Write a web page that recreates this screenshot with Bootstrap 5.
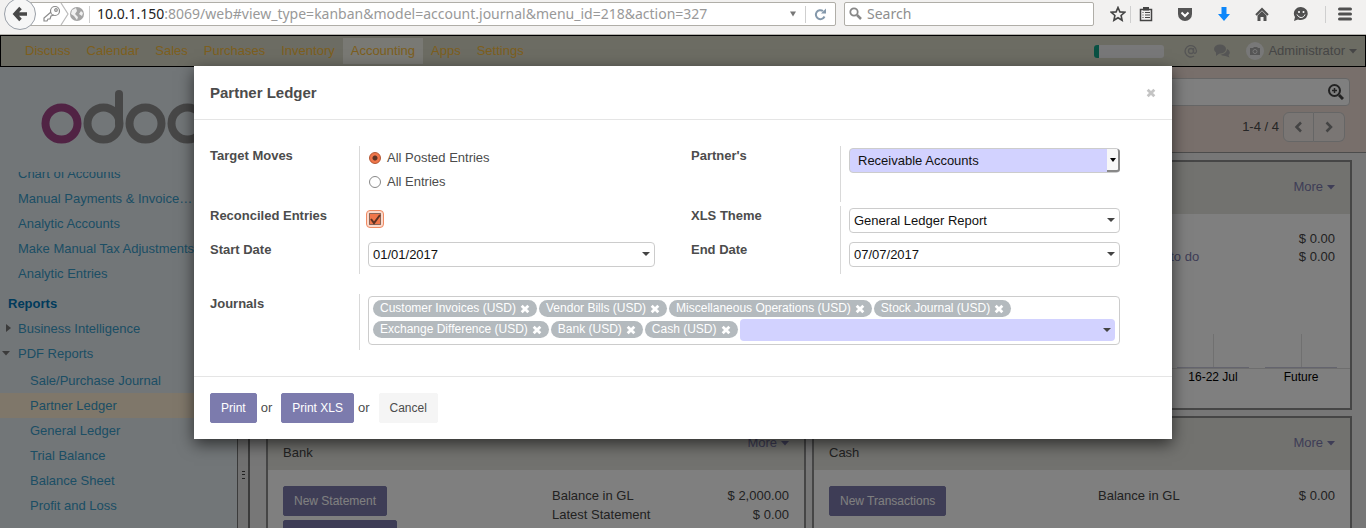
<!DOCTYPE html>
<html lang="en">
<head>
<meta charset="utf-8">
<meta name="viewport" content="width=device-width, initial-scale=1">
<title>Partner Ledger - Odoo</title>
<link href="https://cdn.jsdelivr.net/npm/bootstrap@5.3.0/dist/css/bootstrap.min.css" rel="stylesheet">
<style>
body{font-family:"Liberation Sans",Arial,sans-serif;font-size:13px;line-height:18px;color:#4c4c4c;overflow:hidden}
a{text-decoration:none}
svg{display:block;flex:none}
/* browser toolbar */
.chrome{height:35px;background:#f2f1f0;border-bottom:1px solid #b5b3ae;font:14px/24px "Noto Sans",sans-serif;padding:2px 14px 8px 4px}
.chrome button{border:0;background:none;padding:0}
.back-btn{width:32px;height:32px;border:1px solid #9aa0a8!important;border-radius:50%;background:#f6f6f6!important;margin-top:-4px;z-index:2}
.url-box,.find-box{height:24px;border:1px solid #b0aea8;background:#fff;border-radius:2px}
.url-box{margin-left:-8px;padding-left:10px}
.find-box input{border:0;outline:0;padding:0;background:none;color:#8e8e8e;height:22px;min-width:0}
.find-box input::placeholder{color:#8e8e8e}
.url-text{color:#999;white-space:nowrap;overflow:hidden;padding-left:7px}
.url-text b{color:#222;font-weight:400}
.find-box{width:250px}
.vline{width:1px;height:17px;background:#cfcfcf}
/* application */
.app-nav{height:32px;background:#d8d8c6;border:1px solid #000;padding:0 8px 0 16px}
.app-nav .nav-link{color:#fabe3c;padding:6px 8px;line-height:18px}
.app-nav .nav-link.active{background:#f2f2e8;padding-top:4px;padding-bottom:4px;margin:2px 0}
.meter{width:70px;height:13px;background:#f0f0f2;border-radius:3px}
.meter .progress-bar{background:#12a386}
.user-btn{border:0;background:none;color:#8c8c8c;padding:0}
.side{width:237px;background:#e5ecf1}
.side-scroll{overflow:hidden}
.side-list{margin:-11px 0 0}
.side-list a{display:block;height:25px;line-height:25px;padding-left:18px;color:#389cc9;white-space:nowrap}
.side-list .sub{padding-top:2px}
.side-list .sub a{padding-left:30px}
.side-list .current{background:#ffefd5}
.side-list h2{font-size:13px;font-weight:700;line-height:24px;margin:6px 0 0 8px;color:#0076b8}
.tri{position:absolute;left:6px;top:8px;color:#777}
.tri-open{left:2px;top:10px}
.logo-box{padding:22px 0 0 40px;height:105px}
.splitter{width:13px;background:#e2e2e2;border-left:1px solid #777;border-right:2px solid #777;padding-bottom:49px}
.grip{width:3px;height:8px;border-top:1px solid #444;border-bottom:1px solid #444;background:linear-gradient(transparent 2px,#444 2px,#444 3px,transparent 3px)}
.content{background:#eee}
.cpanel{background:#f0dfd6;border-bottom:1px solid #999;height:86px;padding:11px 16px 0}
.search-view{height:28px;border:1px solid #ccc;border-radius:4px;background:#fff;padding:0 5px}
.pager{padding:6px 5px 0 0}
.pager-btn{width:31px;height:30px;border:1px solid #ccc;background:#f5ece8;color:#888;padding:0}
.board{padding:7px 14px 0 16px;gap:6px;display:grid;grid-template-columns:1fr 1fr}
.tile{border:2px solid #8c8c8c;background:#fff;min-height:250px;color:#444}
.tile-head{background:#e4e4df;height:52px;padding:16px 15px 0}
.tile-head a,.tile-link{color:#7c7bad}
.tile-title{padding-top:10px}
.tile-body{padding:16px 15px;line-height:19px}
.tile-body.tight{line-height:18px}
.btn-odoo{--bs-btn-bg:#7c7bad;--bs-btn-border-color:#7c7bad;--bs-btn-color:#fff;--bs-btn-hover-bg:#6564a0;--bs-btn-hover-color:#fff}
.btn-odoo,.btn-plain{font-size:12px;line-height:18px;padding:5px 10px;border-radius:2px;height:30px}
.chart,.chart-names{padding-right:13px}
.chart{border-bottom:1px solid #ddd;height:35px}
.chart i{width:72px;border-bottom:1px solid #c9c8dc;display:flex;justify-content:center}
.chart i::before{content:"";width:1px;background:#e0e0e0}
.chart-names{font-size:12px;color:#000;line-height:16px;padding-bottom:23px}
.chart-names span{width:72px;text-align:center}
/* dialog */
.shade{position:absolute;inset:0;background:rgba(0,0,0,.5);z-index:5}
.wizard{max-width:978px;margin:31px auto 0}
.wizard .modal-content{background:#fff;box-shadow:0 5px 15px rgba(0,0,0,.6);color:#4c4c4c}
.wizard .modal-header{padding:16px;height:54px;border-bottom:1px solid #e5e5e5}
.wizard h1{font-size:15px;line-height:22px;font-weight:700}
.wizard .modal-body{padding:26px 52px 26px 16px}
.wizard .modal-footer{padding:16px;border-top:1px solid #e5e5e5;gap:4px}
.wizard .modal-footer>*{margin:0}
.form-cols{display:grid;grid-template-columns:minmax(0,1fr) 429px;column-gap:36px}
.frow{display:flex;min-height:34px}
.frow>label,.frow>.flabel{width:149px;flex:none;font-weight:700;line-height:20px;margin:0}
.frow>.fcell{flex:1;min-width:0;border-left:1px solid #d9d9d9;padding:2px 0 0 8px}
.frow-tall{min-height:60px}
.frow-tall .gapped{margin-bottom:4px}
.frow-journals{min-height:56px;margin-top:20px}
.field{display:block;width:100%;height:25px;border:1px solid #ccc;border-radius:4px;padding:0 20px 0 4px;color:#111;font-size:13px;outline:0;appearance:none;background:#fff url("data:image/svg+xml,%3Csvg xmlns='http://www.w3.org/2000/svg' width='8' height='5'%3E%3Cpath fill='%23444' d='M0 0h8L4 4z'/%3E%3C/svg%3E") no-repeat right 4px center}
.must{background-color:#d2d2ff}
.pick{position:relative}
.pick select{padding-left:8px}
.pick::after{content:"";position:absolute;right:0;top:1px;width:13px;height:23px;background:#f7f7f7 url("data:image/svg+xml,%3Csvg xmlns='http://www.w3.org/2000/svg' width='6' height='4'%3E%3Cpath d='M0 0h6L3 4z'/%3E%3C/svg%3E") no-repeat center;border-right:2px solid #888;border-bottom:2px solid #888;border-radius:0 3px 3px 0;pointer-events:none}
.choice{display:flex;align-items:center;gap:6px;line-height:24px;padding-left:1px;margin:0}
.choice input{appearance:none;width:12px;height:12px;border:1px solid #888;border-radius:50%;margin:0}
.choice input:checked{border-color:#b3532f;background:radial-gradient(circle,#5d3324 2px,#f0764a 3px)}
.tick{appearance:none;display:block;width:18px;height:18px;margin:2px 0 0 -2px;border:1px solid #f08a62;border-radius:4px;background:#fbd9cb url("data:image/svg+xml,%3Csvg xmlns='http://www.w3.org/2000/svg' width='14' height='14'%3E%3Cpath fill='%23f0764a' stroke='%23222' stroke-dasharray='1 1' d='M1.5 1.5h11v11h-11z'/%3E%3Cpath fill='none' stroke='%235d3324' stroke-width='2' d='M3 7l3 4 6-8'/%3E%3C/svg%3E") no-repeat center}
.tags{border:1px solid #ccc;border-radius:4px;padding:3px 4px 2px;gap:0 2px;min-height:47px}
.tag{background:#b4babe;color:#fff;height:17px;border-radius:9px;padding:0 7px;line-height:17px;font-size:12px;margin:0 0 4px;display:flex;align-items:center;gap:4px}
.tag button{border:0;background:none;padding:0;color:#fff}
.tags .field{flex:1;width:auto;min-width:90px;height:22px;border:0;margin-top:-2px}
.btn-plain{--bs-btn-bg:#f5f5f5;--bs-btn-border-color:#f5f5f5;--bs-btn-color:#4c4c4c}
.wizard .modal-footer .or{margin-right:5px}
</style>
</head>
<body class="vh-100 d-flex flex-column">
<svg class="d-none" aria-hidden="true">
<symbol id="x" viewBox="0 0 9 9"><path d="M1.500 1.500l6 6M7.500 1.500l-6 6" stroke="currentColor" stroke-width="2.500"/></symbol>
<symbol id="down" viewBox="0 0 8 5"><path d="M0 0h8L4 4.500z" fill="currentColor"/></symbol>
</svg>
<header class="chrome d-flex flex-shrink-0">
<button class="back-btn d-flex align-items-center justify-content-center flex-shrink-0" aria-label="Back"><svg width="16" height="16" viewBox="0 0 16 16" fill="none" stroke="#484848" stroke-width="3.500"><path d="M8.500 2L3 8l5.500 6M3 8h12"/></svg></button>
<div class="url-box flex-fill d-flex align-items-center">
<svg width="50" height="22" viewBox="0 0 50 22"><g fill="none" stroke="#8b8b8b" stroke-width="1.200"><circle cx="16" cy="8" r="4.500"/><circle cx="17" cy="7" r="1.300"/><path d="M12 9l-7 6v3h3l1-2h2l1-3 3-1"/><path d="M22 0l7 11-7 11" stroke="#bbb"/></g><circle cx="38" cy="11" r="7" fill="#a4a4a4"/><path d="M33 7l4-2 1 3-2 3 3 3-1 3-3-4-3-2zm9 1l2 2-1 3-3-2z" fill="#f0f0f0"/></svg>
<span class="vline"></span>
<div class="url-text flex-fill"><b>10.0.1.150</b>:8069/web#view_type=kanban&amp;model=account.journal&amp;menu_id=218&amp;action=327</div>
<svg width="8" height="6" class="me-2" viewBox="0 0 8 6"><path d="M1 0.500h6L4 5.500z" fill="#777"/></svg>
<span class="vline me-2"></span>
<button aria-label="Reload" class="me-2"><svg width="13" height="13" viewBox="0 0 13 13"><path d="M10.500 8.500A4.500 4.500 0 1 1 9 3" fill="none" stroke="#8498ab" stroke-width="2"/><path d="M7 5.500h5V0.500z" fill="#8498ab"/></svg></button>
</div>
<div class="find-box d-flex align-items-center ms-2 ps-1 flex-shrink-0"><svg width="14" height="14" viewBox="0 0 14 14" fill="none" stroke="#888"><circle cx="5" cy="5" r="3.700" stroke-width="1.800"/><path d="M8 8l4 4" stroke-width="2.500"/></svg><input class="ps-1" aria-label="Search" placeholder="Search"></div>
<div class="d-flex align-items-center flex-shrink-0">
<button class="ms-3" aria-label="Bookmark"><svg width="16" height="16" viewBox="0 0 16 16"><path d="M8 1.500l1.900 4.400 4.800.4-3.600 3.200 1 4.800L8 11.700l-4.100 2.600 1-4.800L1.300 6.300l4.800-.4z" fill="none" stroke="#444" stroke-width="1.600"/></svg></button>
<span class="vline mx-1"></span>
<button class="ms-1 me-3" aria-label="Bookmarks list"><svg width="14" height="16" viewBox="0 0 14 16"><path d="M1.500 3.500h11v11h-11z" fill="none" stroke="#444" stroke-width="1.500"/><path d="M3.500 6.500h1M6 6.500h5M3.500 9h1M6 9h5M3.500 11.500h1M6 11.500h5" stroke="#444" stroke-width="1"/><path d="M4 1h6v3.500H4z" fill="#444"/></svg></button>
<button class="ms-2 me-3" aria-label="Pocket"><svg width="16" height="15" viewBox="0 0 14 15"><path d="M0 1h14v6a7 7 0 0 1-14 0z" fill="#555"/><path d="M3.500 5.500L7 9l3.500-3.500" fill="none" stroke="#fff" stroke-width="2"/></svg></button>
<button class="ms-2 me-3" aria-label="Downloads"><svg width="14" height="16" viewBox="0 0 14 16"><path d="M4.500 1h5v7H13l-6 7-6-7h3.500z" fill="#0d87fa"/></svg></button>
<button class="ms-2 me-3" aria-label="Home"><svg width="14" height="16" viewBox="0 0 14 16"><path d="M1 9l6-6 6 6" fill="none" stroke="#505050" stroke-width="2"/><path d="M2.500 9.500L7 5l4.500 4.500V15H8.500v-4h-3v4h-3z" fill="#505050"/></svg></button>
<button class="ms-2" aria-label="Chat"><svg width="16" height="16" viewBox="0 0 16 16"><path d="M8 1a7 6.500 0 1 1-3 12.500L1 15l1-4A7 6.500 0 0 1 8 1z" fill="#505050"/><circle cx="6" cy="6" r="1" fill="#fff"/><circle cx="10.500" cy="6" r="1" fill="#fff"/><path d="M4 8.500c2 4 6.500 4 8 0" fill="none" stroke="#fff"/></svg></button>
<span class="vline me-2 ms-3"></span>
<button class="ms-1" aria-label="Menu"><svg width="14" height="14" viewBox="0 0 14 14"><path d="M1.500 2h11M1.500 7h11M1.500 12h11" stroke="#505050" stroke-width="3" stroke-linecap="round"/></svg></button>
</div>
</header>
<div class="position-relative d-flex flex-column flex-fill overflow-hidden">
<nav class="app-nav d-flex align-items-center flex-shrink-0">
<div class="nav flex-nowrap me-auto">
<a class="nav-link" href="#">Discuss</a><a class="nav-link" href="#">Calendar</a><a class="nav-link" href="#">Sales</a><a class="nav-link" href="#">Purchases</a><a class="nav-link" href="#">Inventory</a><a class="nav-link active" href="#">Accounting</a><a class="nav-link" href="#">Apps</a><a class="nav-link" href="#">Settings</a>
</div>
<div class="progress meter me-3"><div class="progress-bar" style="width:7%"></div></div>
<svg class="ms-1 me-3" width="14" height="14" viewBox="0 0 14 14" fill="none" stroke="#aaa" stroke-width="1.300"><circle cx="7" cy="7" r="2.500"/><path d="M9.500 4v4.500c1 1.500 3 .5 3-1.500a5.700 5.700 0 1 0-2.500 5"/></svg>
<svg class="me-3" width="16" height="14" viewBox="0 0 16 14" fill="#aaa"><ellipse cx="6" cy="5" rx="6" ry="4.500"/><path d="M2 7v5l4-3zM13 5c4 2 3 5 1.500 6l1 2.500-4-1.500C9 12 7 11 6.500 10.500 10 10.500 13 8 13 5z"/></svg>
<button class="user-btn d-flex align-items-center gap-1"><svg width="18" height="18" viewBox="0 0 18 18"><circle cx="9" cy="9" r="9" fill="#f0f0f0"/><path d="M4 6h3l1-1h3l1 1h2v7H4z" fill="#aaa"/><circle cx="9" cy="9.500" r="2" fill="#aaa" stroke="#f0f0f0"/></svg>Administrator <svg width="8" height="5"><use href="#down"/></svg></button>
</nav>
<div class="d-flex flex-fill overflow-hidden">
<aside class="side flex-shrink-0 d-flex flex-column">
<div class="logo-box flex-shrink-0"><svg width="180" height="56" viewBox="0 0 180 56" fill="none" stroke="#8f8f8f" stroke-width="8"><circle cx="21.500" cy="34.500" r="16" stroke="#a24689"/><circle cx="63.500" cy="34.500" r="16"/><path d="M79 34.500V5" stroke-linecap="round"/><circle cx="105.500" cy="34.500" r="16"/><circle cx="147.500" cy="34.500" r="16"/></svg></div>
<div class="side-scroll flex-fill">
<div class="side-list">
<a href="#">Chart of Accounts</a><a href="#">Manual Payments &amp; Invoice…</a><a href="#">Analytic Accounts</a><a href="#">Make Manual Tax Adjustments</a><a href="#">Analytic Entries</a>
<h2>Reports</h2>
<a class="position-relative" href="#"><svg class="tri" width="5" height="8"><path d="M0 0l5 4-5 4z" fill="currentColor"/></svg>Business Intelligence</a>
<a class="position-relative" href="#"><svg class="tri tri-open" width="8" height="5"><use href="#down"/></svg>PDF Reports</a>
<div class="sub"><a href="#">Sale/Purchase Journal</a><a class="current" href="#">Partner Ledger</a><a href="#">General Ledger</a><a href="#">Trial Balance</a><a href="#">Balance Sheet</a><a href="#">Profit and Loss</a></div>
</div>
</div>
</aside>
<div class="splitter flex-shrink-0 d-flex flex-column align-items-center justify-content-end"><div class="grip"></div></div>
<main class="content flex-fill overflow-hidden">
<div class="cpanel">
<div class="search-view d-flex justify-content-end align-items-center"><svg width="16" height="16" viewBox="0 0 16 16" fill="none" stroke="#444" stroke-width="2"><circle cx="6.500" cy="6.500" r="5.500"/><path d="M11 11l4 4" stroke-width="3"/><path d="M6.500 4v5M4 6.500h5" stroke-width="1.500"/></svg></div>
<div class="pager d-flex justify-content-end align-items-center"><span class="me-1">1-4 / 4</span><button class="pager-btn rounded-start d-flex align-items-center justify-content-center" aria-label="Previous"><svg width="10" height="12" viewBox="0 0 10 12" fill="none" stroke="currentColor" stroke-width="2.500"><path d="M7 1.500L2.500 6 7 10.500"/></svg></button><button class="pager-btn border-start-0 rounded-end d-flex align-items-center justify-content-center" aria-label="Next"><svg width="10" height="12" viewBox="0 0 10 12" fill="none" stroke="currentColor" stroke-width="2.500"><path d="M2.500 1.500L7 6l-4.500 4.500"/></svg></button></div>
</div>
<div class="board">
<section class="tile"><div class="tile-head"></div></section>
<section class="tile d-flex flex-column"><div class="tile-head d-flex justify-content-end"><a href="#" class="d-flex align-items-center gap-1 align-self-start">More <svg width="8" height="5"><use href="#down"/></svg></a></div>
<div class="tile-body tight row g-0 pb-0 flex-fill align-content-start"><div class="col-6 offset-6 ps-3"><div class="d-flex justify-content-between"><span>Invoices</span><span>$ 0.00</span></div><div class="d-flex justify-content-between"><a href="#" class="tile-link">0 Payments to do</a><span>$ 0.00</span></div></div></div>
<div class="chart d-flex justify-content-end gap-3"><i></i><i></i></div>
<div class="chart-names d-flex justify-content-end gap-3"><span>16-22 Jul</span><span>Future</span></div></section>
<section class="tile"><div class="tile-head d-flex justify-content-between"><span class="tile-title">Bank</span><a href="#" class="d-flex align-items-center gap-1 align-self-start">More <svg width="8" height="5"><use href="#down"/></svg></a></div>
<div class="tile-body row g-0"><div class="col-6 d-flex flex-column align-items-start gap-1"><button class="btn btn-odoo">New Statement</button><button class="btn btn-odoo">Import Statement</button></div><div class="col-6"><div class="d-flex justify-content-between ps-3"><span>Balance in GL</span><span>$ 2,000.00</span></div><div class="d-flex justify-content-between ps-3"><span>Latest Statement</span><span>$ 0.00</span></div></div></div></section>
<section class="tile"><div class="tile-head d-flex justify-content-between"><span class="tile-title">Cash</span><a href="#" class="d-flex align-items-center gap-1 align-self-start">More <svg width="8" height="5"><use href="#down"/></svg></a></div>
<div class="tile-body row g-0"><div class="col-6"><button class="btn btn-odoo">New Transactions</button></div><div class="col-6"><div class="d-flex justify-content-between ps-3"><span>Balance in GL</span><span>$ 0.00</span></div></div></div></section>
</div>
</main>
</div>
<div class="shade">
<div class="wizard" role="dialog" aria-labelledby="wizard-title">
<form class="modal-content border-0 rounded-0">
<div class="modal-header"><h1 class="modal-title" id="wizard-title">Partner Ledger</h1><button type="button" class="border-0 bg-transparent p-0" aria-label="Close"><svg width="10" height="10" color="#c4c4c4"><use href="#x"/></svg></button></div>
<div class="modal-body">
<div class="form-cols">
<div>
<div class="frow frow-tall"><span class="flabel">Target Moves</span><div class="fcell pt-0"><label class="choice"><input type="radio" name="moves" checked>All Posted Entries</label><label class="choice"><input type="radio" name="moves">All Entries</label></div></div>
<div class="frow"><label for="rec">Reconciled Entries</label><div class="fcell"><input class="tick" type="checkbox" id="rec" checked></div></div>
<div class="frow"><label for="sd">Start Date</label><div class="fcell"><input class="field" id="sd" value="01/01/2017"></div></div>
</div>
<div>
<div class="frow frow-tall"><label for="pt">Partner's</label><div class="fcell gapped"><div class="pick"><select class="field must" id="pt"><option>Receivable Accounts</option></select></div></div></div>
<div class="frow"><label for="xt">XLS Theme</label><div class="fcell"><input class="field" id="xt" value="General Ledger Report"></div></div>
<div class="frow"><label for="ed">End Date</label><div class="fcell"><input class="field" id="ed" value="07/07/2017"></div></div>
</div>
</div>
<div class="frow frow-journals"><label for="jr">Journals</label><div class="fcell">
<div class="tags d-flex flex-wrap">
<span class="tag">Customer Invoices (USD)<button type="button" aria-label="Remove"><svg width="10" height="10"><use href="#x"/></svg></button></span>
<span class="tag">Vendor Bills (USD)<button type="button" aria-label="Remove"><svg width="10" height="10"><use href="#x"/></svg></button></span>
<span class="tag">Miscellaneous Operations (USD)<button type="button" aria-label="Remove"><svg width="10" height="10"><use href="#x"/></svg></button></span>
<span class="tag">Stock Journal (USD)<button type="button" aria-label="Remove"><svg width="10" height="10"><use href="#x"/></svg></button></span>
<span class="w-100"></span>
<span class="tag">Exchange Difference (USD)<button type="button" aria-label="Remove"><svg width="10" height="10"><use href="#x"/></svg></button></span>
<span class="tag">Bank (USD)<button type="button" aria-label="Remove"><svg width="10" height="10"><use href="#x"/></svg></button></span>
<span class="tag">Cash (USD)<button type="button" aria-label="Remove"><svg width="10" height="10"><use href="#x"/></svg></button></span>
<input class="field must" id="jr">
</div></div></div>
</div>
<div class="modal-footer justify-content-start"><button type="button" class="btn btn-odoo">Print</button><span class="or">or</span><button type="button" class="btn btn-odoo">Print XLS</button><span class="or">or</span><button type="button" class="btn btn-plain">Cancel</button></div>
</form>
</div>
</div>
</div>
<script src="https://cdn.jsdelivr.net/npm/bootstrap@5.3.0/dist/js/bootstrap.bundle.min.js"></script>
</body>
</html>
